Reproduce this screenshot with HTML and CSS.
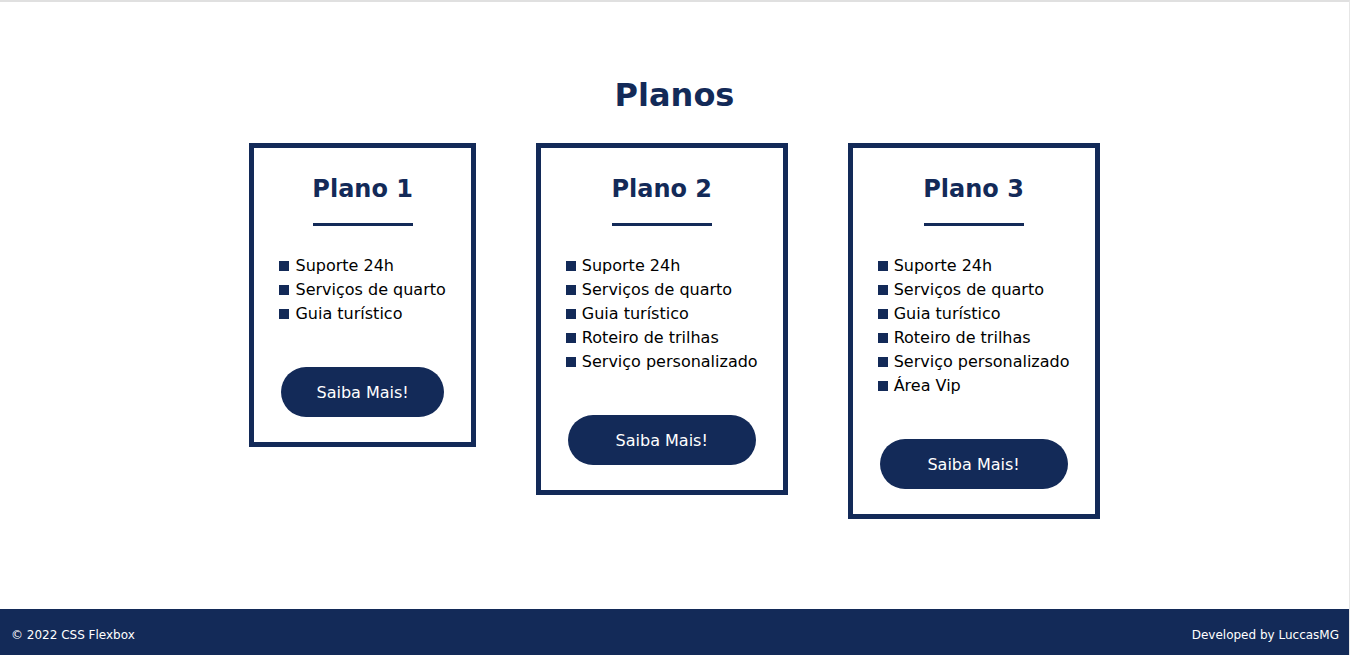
FILE: index.html
```html
<!DOCTYPE html>
<html lang="pt-BR">
<head>
<meta charset="utf-8">
<title>Planos</title>
<link rel="stylesheet" href="styles.css">
</head>
<body>
<div class="page">
  <main class="main">
    <h1 class="title">Planos</h1>
    <div class="plans">
      <section class="card">
        <h2 class="card-title">Plano 1</h2>
        <div class="rule"></div>
        <ul class="features">
          <li>Suporte 24h</li>
          <li>Serviços de quarto</li>
          <li>Guia turístico</li>
        </ul>
        <button class="btn">Saiba Mais!</button>
      </section>
      <section class="card">
        <h2 class="card-title">Plano 2</h2>
        <div class="rule"></div>
        <ul class="features">
          <li>Suporte 24h</li>
          <li>Serviços de quarto</li>
          <li>Guia turístico</li>
          <li>Roteiro de trilhas</li>
          <li>Serviço personalizado</li>
        </ul>
        <button class="btn">Saiba Mais!</button>
      </section>
      <section class="card">
        <h2 class="card-title">Plano 3</h2>
        <div class="rule"></div>
        <ul class="features">
          <li>Suporte 24h</li>
          <li>Serviços de quarto</li>
          <li>Guia turístico</li>
          <li>Roteiro de trilhas</li>
          <li>Serviço personalizado</li>
          <li>Área Vip</li>
        </ul>
        <button class="btn">Saiba Mais!</button>
      </section>
    </div>
  </main>
  <footer class="footer">
    <span>© 2022 CSS Flexbox</span>
    <span>Developed by LuccasMG</span>
  </footer>
</div>
</body>
</html>
```
FILE: styles.css
```css
* { box-sizing: border-box; }
html, body { margin: 0; padding: 0; }
body {
  font-family: "DejaVu Sans", Verdana, sans-serif;
  color: #000;
  background: #fff;
}
.page {
  min-height: 100vh;
  display: flex;
  flex-direction: column;
  border-top: 2px solid #e0e0e0;
  border-right: 1px solid #e6e6e6;
}
.main { flex: 1; }
.title {
  margin: 75px 0 0;
  text-align: center;
  font-size: 32px;
  line-height: 37px;
  color: #132a58;
  font-weight: bold;
}
.plans {
  display: flex;
  justify-content: center;
  align-items: flex-start;
  gap: 60px;
  margin-top: 29px;
}
.card {
  border: 5px solid #132a58;
  padding: 27px 25px 25px;
  display: flex;
  flex-direction: column;
}
.card-title {
  margin: 0;
  text-align: center;
  font-size: 24px;
  line-height: 28px;
  color: #132a58;
}
.rule {
  width: 100px;
  height: 3px;
  background: #132a58;
  margin: 20px auto 0;
}
.features {
  list-style: none;
  margin: 28px 0 0;
  padding: 0;
  font-size: 16px;
  line-height: 24px;
}
.features li {
  display: flex;
  align-items: center;
  white-space: nowrap;
}
.features li::before {
  content: "";
  width: 10px;
  height: 10px;
  background: #132a58;
  margin-right: 6px;
  flex: none;
}
.btn {
  margin: 41px 2px 0;
  height: 50px;
  border: none;
  border-radius: 25px;
  background: #132a58;
  color: #fff;
  font-family: inherit;
  font-size: 16px;
  cursor: pointer;
}
.footer {
  height: 46px;
  background: #132a58;
  color: #fff;
  font-size: 12px;
  display: flex;
  justify-content: space-between;
  align-items: center;
  padding: 6px 10px 0 11px;
}
```
